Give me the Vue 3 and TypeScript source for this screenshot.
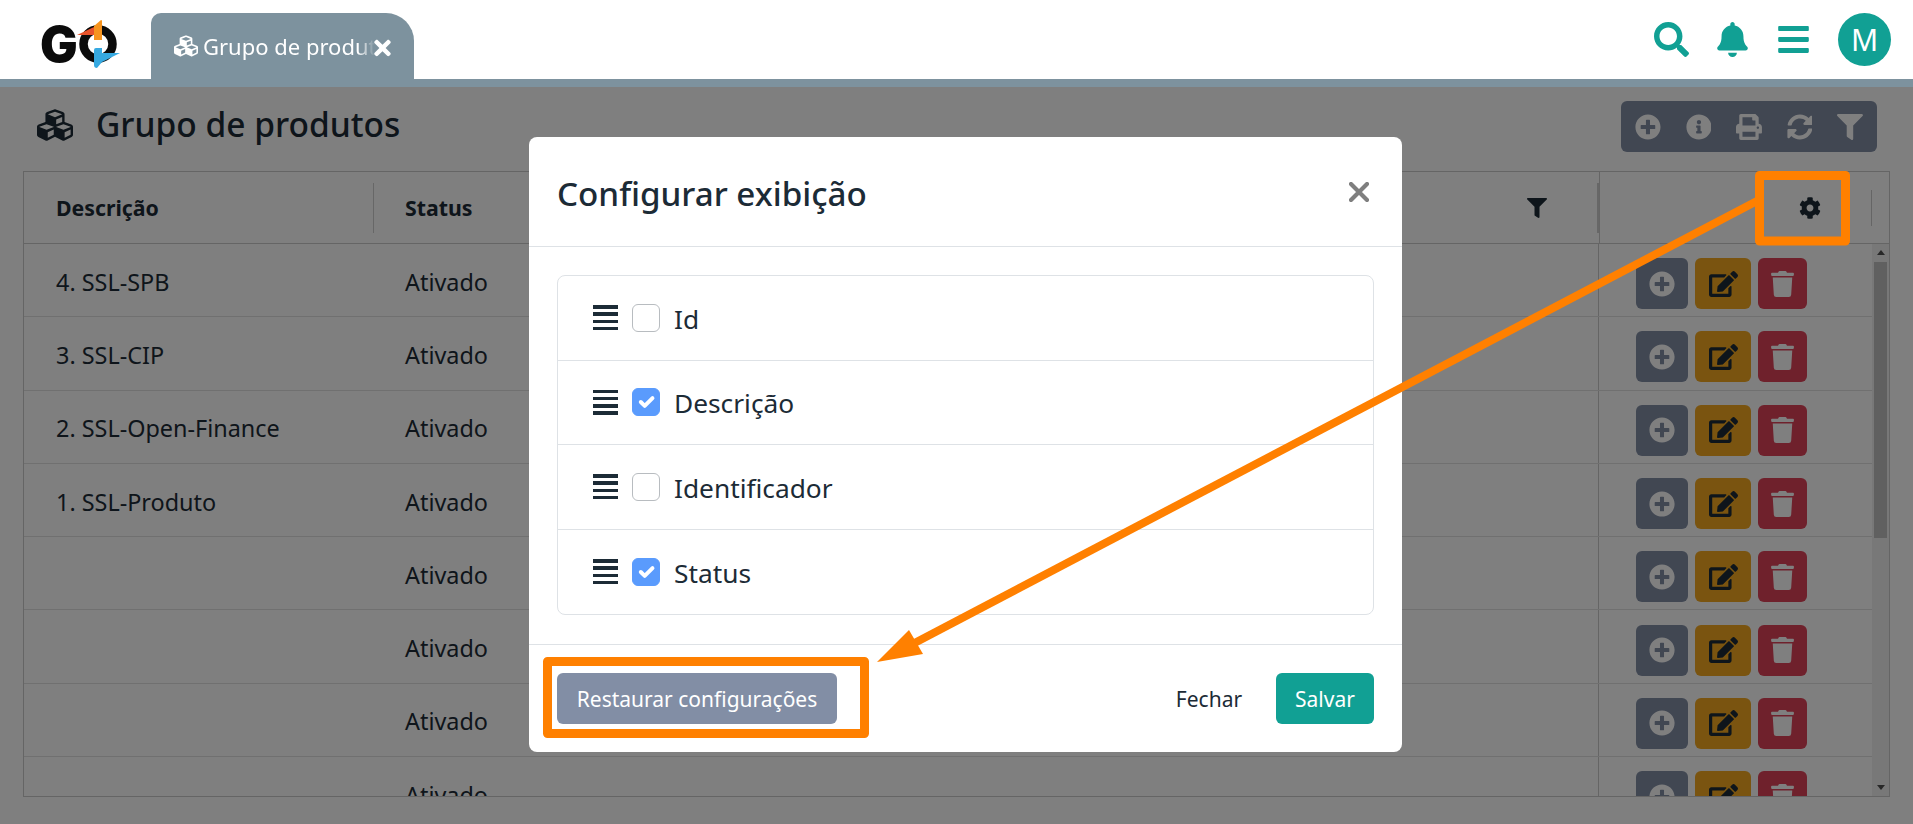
<script setup lang="ts">
const ICONS = {
  plus: { box: '0 0 512 512', d: 'M256 8C119 8 8 119 8 256s111 248 248 248 248-111 248-248S393 8 256 8zm144 276c0 6.6-5.4 12-12 12h-92v92c0 6.6-5.4 12-12 12h-56c-6.6 0-12-5.4-12-12v-92h-92c-6.6 0-12-5.4-12-12v-56c0-6.6 5.4-12 12-12h92v-92c0-6.6 5.4-12 12-12h56c6.6 0 12 5.4 12 12v92h92c6.6 0 12 5.4 12 12v56z' },
  info: { box: '0 0 512 512', d: 'M256 8C119.043 8 8 119.083 8 256c0 136.997 111.043 248 248 248s248-111.003 248-248C504 119.083 392.957 8 256 8zm0 110c23.196 0 42 18.804 42 42s-18.804 42-42 42-42-18.804-42-42 18.804-42 42-42zm56 254c0 6.627-5.373 12-12 12h-88c-6.627 0-12-5.373-12-12v-24c0-6.627 5.373-12 12-12h12v-64h-12c-6.627 0-12-5.373-12-12v-24c0-6.627 5.373-12 12-12h64c6.627 0 12 5.373 12 12v100h12c6.627 0 12 5.373 12 12v24z' },
  print: { box: '0 0 512 512', d: 'M448 192V77.25c0-8.49-3.37-16.62-9.37-22.63L393.37 9.37c-6-6-14.14-9.37-22.63-9.37H96C78.33 0 64 14.33 64 32v160c-35.35 0-64 28.65-64 64v112c0 8.84 7.16 16 16 16h48v96c0 17.67 14.33 32 32 32h320c17.67 0 32-14.33 32-32v-96h48c8.84 0 16-7.16 16-16V256c0-35.35-28.65-64-64-64zm-64 256H128v-96h256v96zm0-224H128V64h192v48c0 8.84 7.16 16 16 16h48v96zm48 72c-13.25 0-24-10.75-24-24 0-13.26 10.75-24 24-24s24 10.74 24 24c0 13.25-10.75 24-24 24z' },
  sync: { box: '0 0 512 512', d: 'M370.72 133.28C339.458 104.008 298.888 87.962 255.848 88c-77.458.068-144.328 53.178-162.791 126.85-1.344 5.363-6.122 9.15-11.651 9.15H24.103c-7.498 0-13.194-6.807-11.807-14.176C33.933 94.924 134.813 8 256 8c66.448 0 126.791 26.136 171.315 68.685L463.03 40.97C478.149 25.851 504 36.559 504 57.941V192c0 13.255-10.745 24-24 24H345.941c-21.382 0-32.09-25.851-16.971-40.971l41.75-41.749zM32 296h134.059c21.382 0 32.09 25.851 16.971 40.971l-41.75 41.75c31.262 29.273 71.835 45.319 114.876 45.28 77.418-.07 144.315-53.144 162.787-126.849 1.344-5.363 6.122-9.15 11.651-9.15h57.304c7.498 0 13.194 6.807 11.807 14.176C478.067 417.076 377.187 504 256 504c-66.448 0-126.791-26.136-171.315-68.685L48.97 471.03C33.851 486.149 8 475.441 8 454.059V320c0-13.255 10.745-24 24-24z' },
  filter: { box: '0 0 512 512', d: 'M487.976 0H24.028C2.71 0-8.047 25.866 7.058 40.971L192 225.941V432c0 7.831 3.821 15.17 10.237 19.662l80 55.98C298.02 518.69 320 507.493 320 487.98V225.941l184.947-184.97C520.021 25.896 509.338 0 487.976 0z' },
  search: { box: '0 0 512 512', d: 'M505 442.7L405.3 343c-4.5-4.5-10.6-7-17-7H372c27.6-35.3 44-79.7 44-128C416 93.1 322.9 0 208 0S0 93.1 0 208s93.1 208 208 208c48.3 0 92.7-16.4 128-44v16.3c0 6.4 2.5 12.5 7 17l99.7 99.7c9.4 9.4 24.6 9.4 33.9 0l28.3-28.3c9.4-9.4 9.4-24.6.1-34zM208 336c-70.7 0-128-57.2-128-128 0-70.7 57.2-128 128-128 70.7 0 128 57.2 128 128 0 70.7-57.2 128-128 128z' },
  bell: { box: '0 0 448 512', d: 'M224 512c35.32 0 63.97-28.65 63.97-64H160.03c0 35.35 28.65 64 63.97 64zm215.39-149.71c-19.32-20.76-55.47-51.99-55.47-154.29 0-77.7-54.48-139.9-127.94-155.16V32c0-17.67-14.32-32-31.98-32s-31.98 14.33-31.98 32v20.84C118.56 68.1 64.08 130.3 64.08 208c0 102.3-36.15 133.53-55.47 154.29-6 6.45-8.66 14.16-8.61 21.71.11 16.4 12.98 32 32.1 32h383.8c19.12 0 32-15.6 32.1-32 .05-7.55-2.61-15.27-8.61-21.71z' },
  bars: { box: '0 0 448 512', d: 'M16 132h416c8.837 0 16-7.163 16-16V76c0-8.837-7.163-16-16-16H16C7.163 60 0 67.163 0 76v40c0 8.837 7.163 16 16 16zm0 160h416c8.837 0 16-7.163 16-16v-40c0-8.837-7.163-16-16-16H16c-8.837 0-16 7.163-16 16v40c0 8.837 7.163 16 16 16zm0 160h416c8.837 0 16-7.163 16-16v-40c0-8.837-7.163-16-16-16H16c-8.837 0-16 7.163-16 16v40c0 8.837 7.163 16 16 16z' },
  cog: { box: '0 0 512 512', d: 'M487.4 315.7l-42.6-24.6c4.3-23.2 4.3-47 0-70.2l42.6-24.6c4.9-2.8 7.1-8.6 5.5-14-11.1-35.6-30-67.8-54.7-94.6-3.8-4.1-10-5.1-14.8-2.3L380.8 110c-17.9-15.4-38.5-27.3-60.8-35.1V25.8c0-5.6-3.9-10.5-9.4-11.7-36.7-8.2-74.3-7.8-109.2 0-5.5 1.2-9.4 6.1-9.4 11.7V75c-22.2 7.9-42.8 19.8-60.8 35.1L88.7 85.5c-4.9-2.8-11-1.9-14.8 2.3-24.7 26.7-43.6 58.9-54.7 94.6-1.7 5.4.6 11.2 5.5 14L67.3 221c-4.3 23.2-4.3 47 0 70.2l-42.6 24.6c-4.9 2.8-7.1 8.6-5.5 14 11.1 35.6 30 67.8 54.7 94.6 3.8 4.1 10 5.1 14.8 2.3l42.6-24.6c17.9 15.4 38.5 27.3 60.8 35.1v49.2c0 5.6 3.9 10.5 9.4 11.7 36.7 8.2 74.3 7.8 109.2 0 5.5-1.2 9.4-6.1 9.4-11.7v-49.2c22.2-7.9 42.8-19.8 60.8-35.1l42.6 24.6c4.9 2.8 11 1.9 14.8-2.3 24.7-26.7 43.6-58.9 54.7-94.6 1.5-5.5-.7-11.3-5.6-14.1zM256 336c-44.1 0-80-35.9-80-80s35.9-80 80-80 80 35.9 80 80-35.9 80-80 80z' },
  times: { box: '0 0 352 512', d: 'M242.72 256l100.07-100.07c12.28-12.28 12.28-32.19 0-44.48l-22.24-22.24c-12.28-12.28-32.19-12.28-44.48 0L176 189.28 75.93 89.21c-12.28-12.28-32.19-12.28-44.48 0L9.21 111.45c-12.28 12.28-12.28 32.19 0 44.48L109.28 256 9.21 356.07c-12.28 12.28-12.28 32.19 0 44.48l22.24 22.24c12.28 12.28 32.2 12.28 44.48 0L176 322.72l100.07 100.07c12.28 12.28 32.2 12.28 44.48 0l22.24-22.24c12.28-12.28 12.28-32.19 0-44.48L242.72 256z' },
  edit: { box: '0 0 576 512', d: 'M402.6 83.2l90.2 90.2c3.8 3.8 3.8 10 0 13.8L274.4 405.6l-92.8 10.3c-12.4 1.4-22.9-9.1-21.5-21.5l10.3-92.8L388.8 83.2c3.8-3.8 10-3.8 13.8 0zm162-22.9l-48.8-48.8c-15.2-15.2-39.9-15.2-55.2 0l-35.4 35.4c-3.8 3.8-3.8 10 0 13.8l90.2 90.2c3.8 3.8 10 3.8 13.8 0l35.4-35.4c15.2-15.3 15.2-40 0-55.2zM384 346.2V448H64V128h229.8c3.2 0 6.2-1.3 8.5-3.5l40-40c7.6-7.6 2.2-20.5-8.5-20.5H48C21.5 64 0 85.5 0 112v352c0 26.5 21.5 48 48 48h352c26.5 0 48-21.5 48-48V306.2c0-10.7-12.9-16-20.5-8.5l-40 40c-2.2 2.3-3.5 5.3-3.5 8.5z' },
  trash: { box: '0 0 448 512', d: 'M432 32H312l-9.4-18.7A24 24 0 0 0 281.1 0H166.8a23.72 23.72 0 0 0-21.4 13.3L136 32H16A16 16 0 0 0 0 48v32a16 16 0 0 0 16 16h416a16 16 0 0 0 16-16V48a16 16 0 0 0-16-16zM53.2 467a48 48 0 0 0 47.9 45h245.8a48 48 0 0 0 47.9-45L416 128H32z' },
  cubes: { box: '0 0 512 512', d: 'M488.6 250.2L392 214V105.5c0-15-9.3-28.4-23.4-33.7l-100-37.5c-8.1-3.1-17.1-3.1-25.3 0l-100 37.5c-14.1 5.3-23.4 18.7-23.4 33.7V214l-96.6 36.2C9.3 255.5 0 268.9 0 283.9V394c0 13.6 7.7 26.1 19.9 32.2l100 50c10.1 5.1 22.1 5.1 32.2 0l103.9-52 103.9 52c10.1 5.1 22.1 5.1 32.2 0l100-50c12.2-6.1 19.9-18.6 19.9-32.2V283.9c0-15-9.3-28.4-23.4-33.7zM358 214.8l-85 31.9v-68.2l85-37v73.3zM154 104.1l102-38.2 102 38.2v.6l-102 41.4-102-41.4v-.6zm84 291.1l-85 42.5v-79.1l85-38.8v75.4zm0-112l-102 41.4-102-41.4v-.6l102-38.2 102 38.2v.6zm240 112l-85 42.5v-79.1l85-38.8v75.4zm0-112l-102 41.4-102-41.4v-.6l102-38.2 102 38.2v.6z' },
}

const toolbar = [ICONS.plus, ICONS.info, ICONS.print, ICONS.sync, ICONS.filter]

const rows = [
  { name: '4. SSL-SPB', status: 'Ativado' },
  { name: '3. SSL-CIP', status: 'Ativado' },
  { name: '2. SSL-Open-Finance', status: 'Ativado' },
  { name: '1. SSL-Produto', status: 'Ativado' },
  { name: '', status: 'Ativado' },
  { name: '', status: 'Ativado' },
  { name: '', status: 'Ativado' },
  { name: '', status: 'Ativado' },
]

const columns = [
  { label: 'Id', checked: false },
  { label: 'Descrição', checked: true },
  { label: 'Identificador', checked: false },
  { label: 'Status', checked: true },
]
</script>

<template>
  <div class="app">
    <header class="topbar">
      <div class="logo">
        <svg viewBox="0 0 100 60" width="100" height="60">
          <text x="-2" y="42" class="logo-text">G</text>
          <circle cx="56" cy="24" r="14.5" fill="none" stroke="#0b0b0b" stroke-width="8.5" />
          <path d="M35 15 L52 7 V15 Z" fill="#e8532b" />
          <path d="M59 0 L52 6 V20 H60 V1 Q60 0 59 0 Z" fill="#f7941e" />
          <path d="M52 30 Q52 28 54 28 H60 V33 L78 33 L60 42 L55 48 Q52 48 52 45 Z" fill="#36a9e1" />
        </svg>
      </div>
      <div class="tab">
        <svg class="tab-icon" :viewBox="ICONS.cubes.box"><path :d="ICONS.cubes.d" /></svg>
        <span class="tab-label">Grupo de produtos</span>
        <svg class="tab-close" :viewBox="ICONS.times.box"><path :d="ICONS.times.d" /></svg>
      </div>
      <div class="top-actions">
        <svg class="top-icon search" :viewBox="ICONS.search.box"><path :d="ICONS.search.d" /></svg>
        <svg class="top-icon bell" :viewBox="ICONS.bell.box"><path :d="ICONS.bell.d" /></svg>
        <svg class="top-icon bars" :viewBox="ICONS.bars.box"><path :d="ICONS.bars.d" /></svg>
        <div class="avatar">M</div>
      </div>
    </header>
    <div class="stripe"></div>

    <main class="page">
      <div class="page-head">
        <svg class="title-icon" :viewBox="ICONS.cubes.box"><path :d="ICONS.cubes.d" /></svg>
        <h1>Grupo de produtos</h1>
        <div class="toolbar">
          <svg v-for="(icon, i) in toolbar" :key="i" :viewBox="icon.box"><path :d="icon.d" /></svg>
        </div>
      </div>

      <div class="table">
        <div class="thead">
          <div class="th th-name"><span class="cell">Descrição</span></div>
          <div class="th th-status">
            <span class="cell">
              <span>Status</span>
              <svg class="th-filter" :viewBox="ICONS.filter.box"><path :d="ICONS.filter.d" /></svg>
            </span>
          </div>
          <div class="th th-actions">
            <span class="cell">
              <svg class="th-cog" :viewBox="ICONS.cog.box"><path :d="ICONS.cog.d" /></svg>
            </span>
          </div>
        </div>
        <div class="tbody">
          <div class="rows">
            <div v-for="(row, i) in rows" :key="i" class="tr">
              <div class="td td-name">{{ row.name }}</div>
              <div class="td td-status">{{ row.status }}</div>
              <div class="td td-actions">
                <button class="act act-add"><svg :viewBox="ICONS.plus.box"><path :d="ICONS.plus.d" /></svg></button>
                <button class="act act-edit"><svg :viewBox="ICONS.edit.box"><path :d="ICONS.edit.d" /></svg></button>
                <button class="act act-del"><svg :viewBox="ICONS.trash.box"><path :d="ICONS.trash.d" /></svg></button>
              </div>
            </div>
          </div>
          <div class="scrollbar">
            <span class="arrow-up"></span>
            <div class="track"><div class="thumb"></div></div>
            <span class="arrow-down"></span>
          </div>
        </div>
      </div>
    </main>

    <div class="backdrop"></div>

    <div class="modal-wrap">
      <div class="modal">
        <div class="modal-head">
          <h2>Configurar exibição</h2>
          <svg class="modal-close" viewBox="0 0 20 20"><path d="M2 2l16 16M18 2L2 18" /></svg>
        </div>
        <div class="modal-body">
          <ul class="col-list">
            <li v-for="col in columns" :key="col.label">
              <span class="drag"><i></i><i></i><i></i><i></i></span>
              <span class="check" :class="{ on: col.checked }">
                <svg v-if="col.checked" viewBox="0 0 20 20"><path d="M6 10l3 3 6-6" /></svg>
              </span>
              <span class="col-label">{{ col.label }}</span>
            </li>
          </ul>
        </div>
        <div class="modal-foot">
          <button class="btn btn-restore">Restaurar configurações</button>
          <button class="btn btn-close">Fechar</button>
          <button class="btn btn-save">Salvar</button>
        </div>
      </div>
    </div>

    <!-- annotation drawn on top of the screenshot -->
    <svg class="callout" viewBox="0 0 1913 824" width="1913" height="824">
      <rect x="1759.5" y="175.5" width="86" height="65.5" class="mark" />
      <rect x="547.5" y="661.5" width="317" height="72" class="mark" />
      <path d="M1757 201 L905 648" class="line" />
      <path d="M877 662 L909 630 L923 654 Z" fill="#ff8000" />
    </svg>
  </div>
</template>

<style>
html, body {
  margin: 0;
  background: #fff;
}
</style>

<style scoped>
.app {
  position: relative;
  width: 1913px;
  height: 824px;
  overflow: hidden;
  background: #fff;
  color: #1c2b36;
  font-family: "Noto Sans", "Open Sans", sans-serif;
}

.topbar {
  position: relative;
  z-index: 3;
  display: flex;
  align-items: flex-end;
  height: 79px;
  background: #fff;
}

.logo {
  width: 151px;
  height: 79px;
  padding: 20px 0 0 42px;
  box-sizing: border-box;
}

.logo svg {
  overflow: visible;
}

.logo-text {
  font-family: Inter, "Liberation Sans", sans-serif;
  font-weight: 900;
  font-size: 50px;
  fill: #0b0b0b;
}

.tab {
  display: flex;
  align-items: center;
  width: 263px;
  height: 66px;
  box-sizing: border-box;
  padding: 0 23px;
  background: #7d929e;
  border-radius: 10px 28px 0 0;
  color: #fff;
}

.tab-icon {
  width: 24px;
  height: 24px;
  flex: none;
  fill: #fff;
  margin-right: 5px;
}

.tab-label {
  width: 172px;
  flex: none;
  overflow: hidden;
  white-space: nowrap;
  font-size: 22px;
  -webkit-mask-image: linear-gradient(to right, #000 90%, transparent);
  mask-image: linear-gradient(to right, #000 90%, transparent);
}

.tab-close {
  width: 19px;
  height: 24px;
  flex: none;
  fill: #fff;
  margin-left: -2px;
  margin-top: 4px;
}

.top-actions {
  margin-left: auto;
  display: flex;
  align-items: center;
  height: 79px;
  padding-right: 22px;
}

.top-icon {
  height: 35px;
  fill: #11a094;
  margin-bottom: 1px;
}

.search { width: 35px; }
.bell { width: 31px; margin-left: 28px; }
.bars { width: 31px; margin-left: 30px; }

.avatar {
  width: 53px;
  height: 53px;
  margin-left: 29px;
  border-radius: 50%;
  background: #11a094;
  color: #fff;
  display: flex;
  align-items: center;
  justify-content: center;
  font-size: 30px;
}

.stripe {
  position: relative;
  z-index: 3;
  height: 8px;
  background: #7d929e;
}

.page {
  padding: 14px 23px 0;
}

.page-head {
  display: flex;
  align-items: center;
  height: 51px;
  margin-bottom: 19px;
}

.title-icon {
  width: 36px;
  height: 36px;
  margin: 0 23px 4px 14px;
  fill: #1c2b36;
  flex: none;
}

h1 {
  margin: 0 0 6px;
  font-size: 33.5px;
  font-weight: 500;
}

.toolbar {
  margin-left: auto;
  margin-right: 13px;
  display: flex;
  align-items: center;
  gap: 24.6px;
  width: 256px;
  height: 51px;
  box-sizing: border-box;
  padding: 0 14px;
  background: #828ea5;
  border-radius: 6px;
}

.toolbar svg {
  width: 26px;
  height: 26px;
  fill: #fff;
}

.table {
  width: 1867px;
  height: 626px;
  box-sizing: border-box;
  border: 1px solid #cbcbcb;
  overflow: hidden;
}

.thead {
  display: flex;
  height: 72px;
  box-sizing: border-box;
  border-bottom: 1px solid #cbcbcb;
}

.th {
  display: flex;
  align-items: center;
  font-size: 21.3px;
  font-weight: 700;
}

.cell {
  display: flex;
  align-items: center;
  width: 100%;
  height: 50px;
  box-sizing: border-box;
}

.th-name {
  width: 350px;
  flex: none;
}

.th-name .cell {
  padding-left: 32px;
  border-right: 1px solid #cfcfcf;
}

.th-status {
  width: 1225px;
  flex: none;
}

.th-status .cell {
  padding: 0 50px 0 31px;
  justify-content: space-between;
  border-right: 2px solid #cfcfcf;
}

.th-filter {
  width: 20px;
  height: 20px;
  fill: #1c2b36;
}

.th-actions {
  flex: 1;
  border-left: 1px solid #cbcbcb;
}

.th-actions .cell {
  justify-content: flex-end;
  height: 36px;
  margin-right: 17px;
  padding-right: 50px;
  border-right: 1px solid #cbcbcb;
}

.th-cog {
  width: 22px;
  height: 22px;
  fill: #1c2b36;
}

.tbody {
  display: flex;
  height: 552px;
}

.rows {
  flex: 1;
  min-width: 0;
}

.tr {
  display: flex;
  height: 73.3px;
  box-sizing: border-box;
  border-bottom: 1px solid #e0e0e0;
  font-size: 23.4px;
}

.td {
  display: flex;
  align-items: center;
}

.td-name {
  width: 350px;
  box-sizing: border-box;
  padding-left: 32px;
  padding-top: 3px;
  flex: none;
}

.td-status {
  width: 1225px;
  padding-left: 31px;
  padding-top: 3px;
  box-sizing: border-box;
  flex: none;
  border-right: 1px solid #cbcbcb;
}

.td-actions {
  flex: 1;
  gap: 7px;
  padding-left: 37px;
  padding-top: 7px;
}

.act {
  height: 51px;
  border: 0;
  border-radius: 6px;
  padding: 0;
  display: flex;
  align-items: center;
  justify-content: center;
}

.act svg {
  height: 26px;
}

.act-add { width: 52px; background: #828ea5; }
.act-add svg { width: 26px; fill: #fff; }
.act-edit { width: 56px; background: #f4a820; }
.act-edit svg { width: 29px; fill: #1c2b36; }
.act-del { width: 49px; background: #de4258; }
.act-del svg { width: 23px; fill: #fff; }

.scrollbar {
  width: 17px;
  flex: none;
  display: flex;
  flex-direction: column;
  align-items: center;
  background: #f1f1f1;
}

.track {
  flex: 1;
  width: 100%;
  padding-top: 1px;
}

.thumb {
  width: 13px;
  height: 276px;
  margin: 0 auto;
  background: #c1c1c1;
}

.arrow-up,
.arrow-down {
  width: 0;
  height: 0;
  margin: 6px 0;
  border-left: 4.5px solid transparent;
  border-right: 4.5px solid transparent;
}

.arrow-up { border-bottom: 5px solid #505050; }
.arrow-down { border-top: 5px solid #505050; }

.backdrop {
  position: absolute;
  z-index: 1;
  inset: 87px 0 0 0;
  background: rgba(0, 0, 0, 0.5);
}

.modal-wrap {
  position: absolute;
  z-index: 2;
  inset: 137px 0 0 18px;
  display: flex;
  justify-content: center;
  align-items: flex-start;
  pointer-events: none;
}

.modal {
  width: 873px;
  height: 615px;
  box-sizing: border-box;
  background: #fff;
  border-radius: 8px;
  display: flex;
  flex-direction: column;
}

.modal-head {
  display: flex;
  align-items: center;
  justify-content: space-between;
  height: 110px;
  box-sizing: border-box;
  padding: 0 33px 0 28px;
  border-bottom: 1px solid #dee2e6;
}

h2 {
  margin: 3px 0 0;
  font-size: 33.2px;
  font-weight: 500;
}

.modal-close {
  width: 20px;
  height: 20px;
  fill: none;
  stroke: #7f7f7f;
  stroke-width: 4.2;
  stroke-linecap: round;
}

.modal-body {
  flex: 1;
  padding: 28px 28px 0;
}

.col-list {
  list-style: none;
  margin: 0;
  padding: 0;
  border: 1px solid #dee2e6;
  border-radius: 8px;
}

.col-list li {
  display: flex;
  align-items: center;
  height: 84.5px;
  box-sizing: border-box;
  padding-left: 35px;
  border-bottom: 1px solid #dee2e6;
}

.col-list li:last-child {
  border-bottom: 0;
}

.drag {
  display: flex;
  flex-direction: column;
  justify-content: space-between;
  width: 25px;
  height: 25px;
  margin-right: 14px;
}

.drag i {
  display: block;
  height: 3.5px;
  background: #1c2b36;
}

.check {
  width: 28px;
  height: 28px;
  box-sizing: border-box;
  border: 1px solid #b8bcc0;
  border-radius: 6px;
  margin-right: 14px;
}

.check.on {
  background: #5a9bfd;
  border-color: #5a9bfd;
}

.check svg {
  display: block;
  width: 100%;
  height: 100%;
  fill: none;
  stroke: #fff;
  stroke-width: 3;
  stroke-linecap: round;
  stroke-linejoin: round;
}

.col-label {
  font-size: 26.3px;
  padding-top: 2px;
}

.modal-foot {
  display: flex;
  align-items: center;
  height: 108px;
  box-sizing: border-box;
  padding: 0 28px;
  border-top: 1px solid #dee2e6;
}

.btn {
  height: 51px;
  border: 0;
  border-radius: 6px;
  font-family: inherit;
  font-size: 21px;
  padding: 0;
}

.btn-restore {
  width: 280px;
  background: #828ea5;
  color: #fff;
}

.btn-close {
  margin-left: auto;
  margin-right: 17px;
  width: 100px;
  background: transparent;
  color: #1c2b36;
}

.btn-save {
  width: 98px;
  background: #11a094;
  color: #fff;
}

.callout {
  position: absolute;
  z-index: 4;
  left: 0;
  top: 0;
  pointer-events: none;
}

.mark {
  fill: none;
  stroke: #ff8000;
  stroke-width: 9;
  stroke-linejoin: round;
}

.line {
  fill: none;
  stroke: #ff8000;
  stroke-width: 8;
}
</style>
